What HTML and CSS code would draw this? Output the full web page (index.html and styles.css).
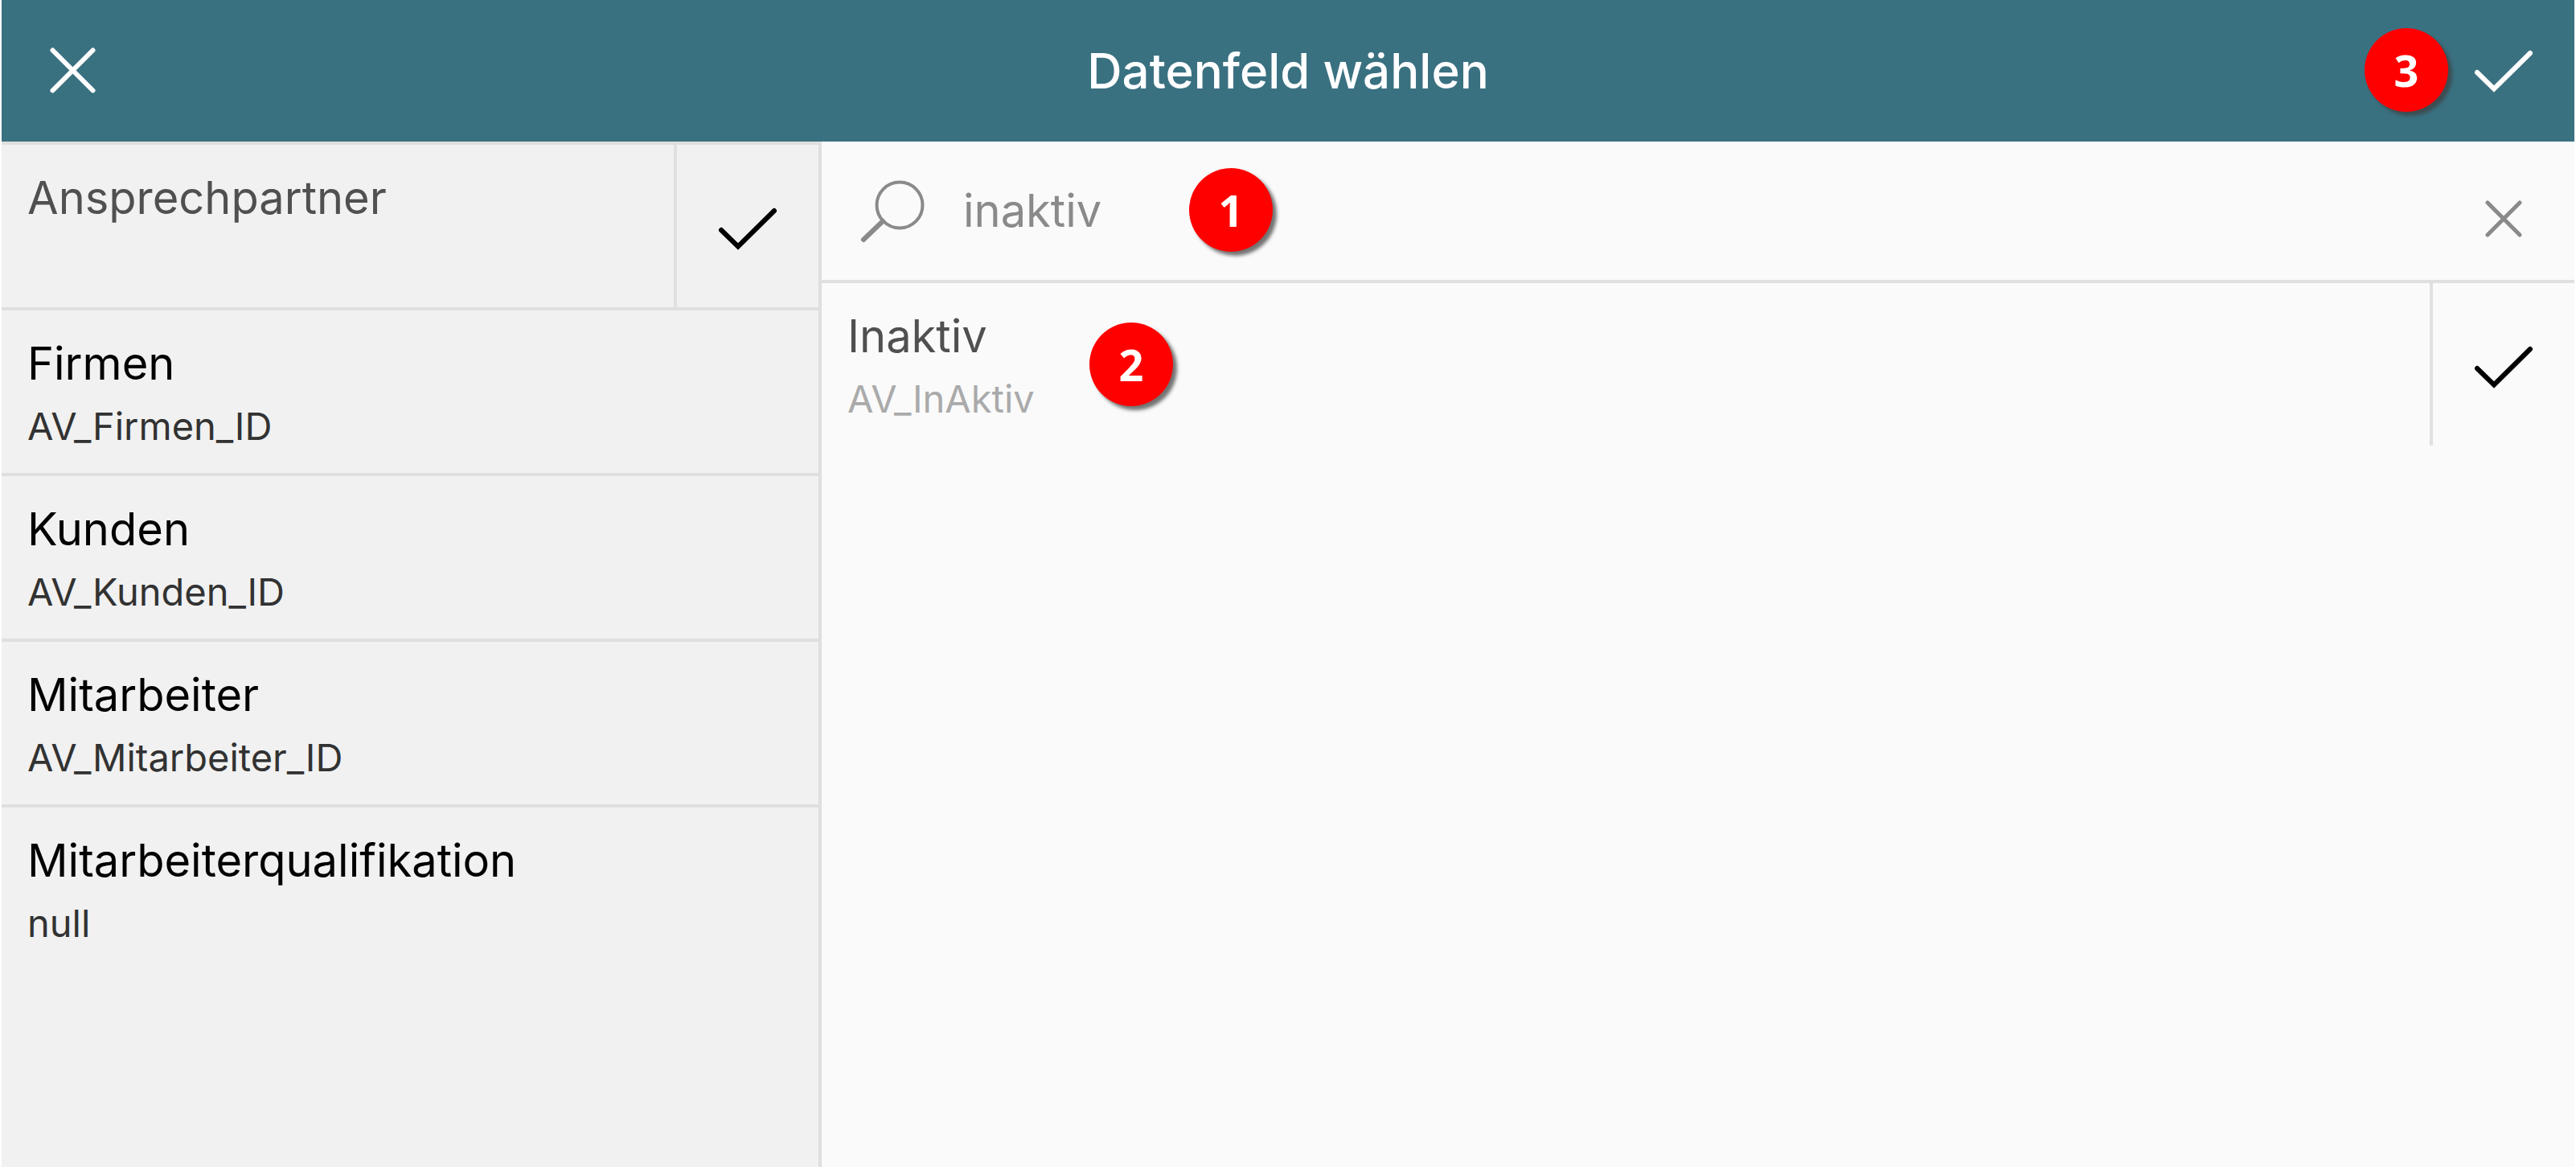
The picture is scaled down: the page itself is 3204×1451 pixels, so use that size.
FILE: index.html
```html
<!DOCTYPE html>
<html lang="de">
<head>
<meta charset="utf-8">
<meta name="viewport" content="width=device-width, initial-scale=1">
<title>Datenfeld wählen</title>
<link rel="stylesheet" href="styles.css">
</head>
<body>
<div class="dialog">
  <header class="header">
    <button class="icon-button" type="button" aria-label="Schließen">
      <svg class="icon" viewBox="0 0 76 76"><path d="M13.500 12.500l50 50M63.500 12.500l-50 50"/></svg>
    </button>
    <h1 class="title">Datenfeld wählen</h1>
    <button class="icon-button" type="button" aria-label="Übernehmen">
      <svg class="icon" viewBox="0 0 76 76"><path d="M5 40l21 20.500L71 16"/></svg>
    </button>
    <span class="badge badge-confirm">3</span>
  </header>
  <div class="content">
    <ul class="list sidebar">
      <li class="row">
        <a class="entry muted" href="#"><span class="name">Ansprechpartner</span></a>
        <button class="icon-button row-check" type="button" aria-label="Ansprechpartner wählen">
          <svg class="icon" viewBox="0 0 76 76"><path d="M5 40l21 20.500L71 16"/></svg>
        </button>
      </li>
      <li class="row"><a class="entry" href="#"><span class="name">Firmen</span><span class="field">AV_Firmen_ID</span></a></li>
      <li class="row"><a class="entry" href="#"><span class="name">Kunden</span><span class="field">AV_Kunden_ID</span></a></li>
      <li class="row"><a class="entry" href="#"><span class="name">Mitarbeiter</span><span class="field">AV_Mitarbeiter_ID</span></a></li>
      <li class="row"><a class="entry" href="#"><span class="name">Mitarbeiterqualifikation</span><span class="field">null</span></a></li>
    </ul>
    <main class="main">
      <form class="search">
        <label class="search-label" for="search" aria-label="Suche">
          <svg class="search-icon" viewBox="0 0 84 84"><circle cx="51" cy="35" r="28.500"/><path class="handle" d="M30 55L6 78"/></svg>
        </label>
        <input class="search-input" id="search" type="text" value="inaktiv" autocomplete="off" spellcheck="false">
        <button class="icon-button clear" type="button" aria-label="Suche leeren">
          <svg class="icon" viewBox="0 0 76 76"><path d="M18 18l40 40M58 18l-40 40"/></svg>
        </button>
        <span class="badge badge-search">1</span>
      </form>
      <ul class="list">
        <li class="row">
          <a class="entry muted" href="#"><span class="name">Inaktiv</span><span class="field">AV_InAktiv</span></a>
          <button class="icon-button row-check" type="button" aria-label="Inaktiv wählen">
            <svg class="icon" viewBox="0 0 76 76"><path d="M5 40l21 20.500L71 16"/></svg>
          </button>
          <span class="badge badge-result">2</span>
        </li>
      </ul>
    </main>
  </div>
</div>
</body>
</html>
```
FILE: styles.css
```css
* {
  box-sizing: border-box;
}

body {
  margin: 0;
  background: #fff;
  font-family: Inter, "Liberation Sans", sans-serif;
  color: #000;
}

.dialog {
  display: flex;
  flex-direction: column;
  min-height: 100vh;
  padding: 0 2px;
}

.header {
  position: relative;
  display: flex;
  align-items: center;
  background: #3a7181;
  color: #fff;
}

.title {
  flex: 1;
  margin: 0;
  font-size: 60px;
  font-weight: 500;
  line-height: 72px;
  text-align: center;
}

.icon-button {
  display: flex;
  align-items: center;
  justify-content: center;
  flex: none;
  width: 176px;
  height: 176px;
  padding: 0;
  border: 0;
  background: none;
  color: inherit;
  cursor: pointer;
}

.icon {
  width: 76px;
  height: 76px;
  fill: none;
  stroke: currentColor;
  stroke-width: 6px;
  stroke-linecap: round;
}

.content {
  display: flex;
  flex: 1;
}

.list {
  margin: 0;
  padding: 0;
  list-style: none;
}

.sidebar {
  flex: none;
  width: 1020px;
  border-right: 4px solid #dfdfdf;
  background: #f1f1f1;
}

.row {
  position: relative;
  display: flex;
  min-height: 202px;
}

.sidebar .row {
  min-height: 206px;
  border-top: 4px solid #dfdfdf;
}

.entry {
  display: flex;
  flex: 1;
  flex-direction: column;
  gap: 12px;
  padding: 30px 32px 28px;
  color: #000;
  text-decoration: none;
}

.name {
  font-size: 56px;
  line-height: 72px;
}

.field {
  font-size: 47px;
  line-height: 60px;
  color: #323232;
}

.muted .name {
  color: #505050;
}

.muted .field {
  color: #aaa;
}

.row-check {
  width: 180px;
  height: auto;
  padding-top: 6px;
  border-left: 4px solid #e0e0e0;
}

.main {
  flex: 1;
  min-width: 0;
  background: #fafafa;
}

.search {
  position: relative;
  display: flex;
  align-items: center;
  border-bottom: 4px solid #dfdfdf;
  color: #8a8a8a;
}

.search-label {
  display: flex;
  padding: 0 46px;
}

.search-icon {
  width: 84px;
  height: 84px;
  fill: none;
  stroke: currentColor;
  stroke-width: 4px;
  stroke-linecap: round;
}

.handle {
  stroke-width: 6px;
}

.search-input {
  flex: 1;
  min-width: 0;
  padding: 0;
  border: 0;
  outline: 0;
  background: none;
  color: inherit;
  font: inherit;
  font-size: 56px;
  line-height: 72px;
}

.clear {
  height: 172px;
  padding-top: 20px;
}

.clear .icon {
  stroke-width: 5px;
}

.badge {
  position: absolute;
  width: 104px;
  height: 104px;
  border-radius: 50%;
  background: #f00;
  box-shadow: 5px 5px 4px rgba(62, 62, 62, 0.72);
  color: #fff;
  font-family: "Open Sans", sans-serif;
  font-size: 54px;
  font-weight: 700;
  line-height: 104px;
  text-align: center;
}

.badge-confirm {
  top: 35px;
  right: 157px;
}

.badge-search {
  top: 33px;
  left: 457px;
}

.badge-result {
  top: 49px;
  left: 333px;
}
```
